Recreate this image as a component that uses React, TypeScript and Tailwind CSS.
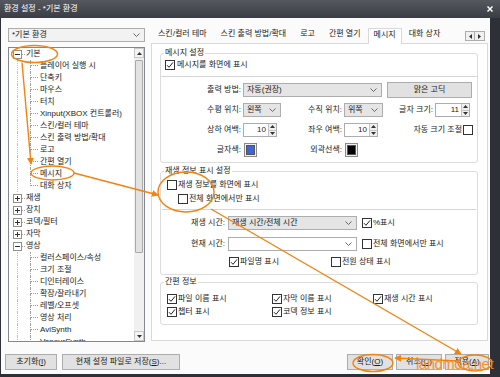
import React from "react";

const ORANGE = "#f5820d";

type TreeNode = { label: string; top?: boolean; exp?: "+" | "-"; last?: boolean };

const TREE: TreeNode[] = [
  { label: "기본", top: true, exp: "-" },
  { label: "플레이어 실행 시" },
  { label: "단축키" },
  { label: "마우스" },
  { label: "터치" },
  { label: "Xinput(XBOX 컨트롤러)" },
  { label: "스킨/컬러 테마" },
  { label: "스킨 출력 방법/확대" },
  { label: "로고" },
  { label: "간편 열기" },
  { label: "메시지" },
  { label: "대화 상자", last: true },
  { label: "재생", top: true, exp: "+" },
  { label: "장치", top: true, exp: "+" },
  { label: "코덱/필터", top: true, exp: "+" },
  { label: "자막", top: true, exp: "+" },
  { label: "영상", top: true, exp: "-" },
  { label: "컬러스페이스/속성" },
  { label: "크기 조절" },
  { label: "디인터레이스" },
  { label: "확장/잘라내기" },
  { label: "레벨/오프셋" },
  { label: "영상 처리" },
  { label: "AviSynth" },
  { label: "VapourSynth" },
];

const TABS = ["스킨/컬러 테마", "스킨 출력 방법/확대", "로고", "간편 열기", "메시지", "대화 상자"];

function Chevron() {
  return (
    <svg width="7" height="4" viewBox="0 0 7 4" className="shrink-0">
      <path d="M0.5 0.5 L3.5 3.5 L6.5 0.5" fill="none" stroke="#5a5a5a" strokeWidth="0.9" />
    </svg>
  );
}

function Tri({ dir }: { dir: "up" | "down" | "left" | "right" }) {
  const d = {
    up: "M0 3 L2.5 0 L5 3 Z",
    down: "M0 0 L5 0 L2.5 3 Z",
    left: "M3 0 L3 5 L0 2.5 Z",
    right: "M0 0 L3 2.5 L0 5 Z",
  }[dir];
  const horiz = dir === "left" || dir === "right";
  return (
    <svg width={horiz ? 3 : 5} height={horiz ? 5 : 3} viewBox={horiz ? "0 0 3 5" : "0 0 5 3"}>
      <path d={d} fill="#333" />
    </svg>
  );
}

function Combo({ value, className, white }: { value: string; className: string; white?: boolean }) {
  return (
    <div
      className={`flex h-[14px] shrink-0 items-center justify-between border border-[#adadad] pl-[3px] pr-[4px] ${
        white ? "bg-white" : "bg-[#e5e5e5]"
      } ${className}`}
    >
      <span className="truncate">{value}</span>
      <Chevron />
    </div>
  );
}

function Check({ checked }: { checked?: boolean }) {
  return (
    <span className="flex h-[10px] w-[10px] shrink-0 items-center justify-center border border-[#333] bg-white">
      {checked && (
        <svg width="8" height="8" viewBox="0 0 8 8">
          <path d="M1 4.2 L3 6.3 L7 1.4" fill="none" stroke="#222" strokeWidth="1" />
        </svg>
      )}
    </span>
  );
}

function CheckLabel({ checked, label, className }: { checked?: boolean; label: string; className?: string }) {
  return (
    <div className={`flex h-[12px] shrink-0 items-center gap-[1px] whitespace-nowrap ${className ?? ""}`}>
      <Check checked={checked} />
      <span>{label}</span>
    </div>
  );
}

function Spin({ value, className }: { value: string; className: string }) {
  return (
    <div className={`flex h-[14px] shrink-0 border border-[#abadb3] bg-white ${className}`}>
      <span className="flex-1 pr-[2px] text-right leading-[12px]">{value}</span>
      <span className="flex w-[8px] flex-col border-l border-[#c3c3c3] bg-[#f0f0f0]">
        <span className="flex flex-1 items-center justify-center border-b border-[#c3c3c3]">
          <Tri dir="up" />
        </span>
        <span className="flex flex-1 items-center justify-center">
          <Tri dir="down" />
        </span>
      </span>
    </div>
  );
}

function Swatch({ color, className }: { color: string; className: string }) {
  return (
    <span className={`flex h-[14px] w-[13px] shrink-0 border border-[#8a8a8a] bg-[#f0f0f0] p-[1px] ${className}`}>
      <span className={`flex-1 border border-[#555] ${color}`} />
    </span>
  );
}

function Label({ children, className }: { children: React.ReactNode; className: string }) {
  return <span className={`shrink-0 whitespace-nowrap text-right ${className}`}>{children}</span>;
}

function Btn({ children, className }: { children: React.ReactNode; className: string }) {
  return (
    <div
      className={`flex h-[16px] shrink-0 items-center justify-center whitespace-nowrap border border-[#adadad] bg-[#e1e1e1] ${className}`}
    >
      {children}
    </div>
  );
}

function GroupTitle({ children }: { children: React.ReactNode }) {
  return <div className="-mt-[7px] ml-[3px] w-fit bg-white px-[1px] leading-[12px]">{children}</div>;
}

function TreeRow({ node }: { node: TreeNode }) {
  if (node.top) {
    return (
      <div className="flex h-[12px] items-center pl-[4px] whitespace-nowrap">
        <span className="relative flex h-[9px] w-[9px] items-center justify-center border border-[#919191] bg-white">
          <span className="h-px w-[5px] bg-[#333]" />
          {node.exp === "+" && <span className="absolute h-[5px] w-px bg-[#333]" />}
        </span>
        <span className="w-[3px] border-t border-dotted border-[#a0a0a0]" />
        <span className="ml-[1px]">{node.label}</span>
      </div>
    );
  }
  return (
    <div className="flex h-[12px] items-stretch whitespace-nowrap">
      <span className="w-[21px] shrink-0">
        <span className="ml-[8px] block h-full border-l border-dotted border-[#c0c0c0]" />
      </span>
      <span className="flex w-[8px] shrink-0 flex-col">
        <span className="h-[6px] border-b border-l border-dotted border-[#a0a0a0]" />
        {!node.last && <span className="h-[6px] border-l border-dotted border-[#a0a0a0]" />}
      </span>
      <span className="ml-[2px] self-center">{node.label}</span>
    </div>
  );
}

export default function App() {
  return (
    <div className="relative h-[377px] w-[500px] overflow-hidden bg-[#2d3037] font-['Liberation_Sans','Noto_Sans_CJK_KR',sans-serif] text-[8px] leading-[12px] text-[#1b1b1b]">
      {/* title bar */}
      <div className="flex h-[18px] items-center justify-between bg-linear-to-b from-[#55585f] to-[#3a3d44] pl-[4px] pr-[7px] text-white">
        <span>환경 설정 - *기본 환경</span>
        <svg width="6" height="6" viewBox="0 0 6 6">
          <path d="M0.5 0.5 L5.5 5.5 M5.5 0.5 L0.5 5.5" stroke="#fff" strokeWidth="1.5" />
        </svg>
      </div>

      <div className="ml-[1px] flex h-[356px] w-[489px] flex-col bg-[#fbfbfb]">
        <div className="flex pl-[7px] pt-[10px]">
          {/* left: profile + tree */}
          <div className="flex w-[137px] flex-col gap-[5px]">
            <div className="flex h-[14px] items-center justify-between border border-[#acacac] bg-[#f2f2f2] pl-[3px] pr-[4px]">
              <span>*기본 환경</span>
              <Chevron />
            </div>
            <div className="flex h-[295px] border border-[#828790] bg-white">
              <div className="flex-1 overflow-hidden">
                {TREE.map((n, i) => (
                  <TreeRow key={i} node={n} />
                ))}
              </div>
              <div className="flex w-[10px] flex-col bg-[#f0f0f0]">
                <div className="flex h-[10px] items-center justify-center border border-[#c8c8c8] bg-[#f4f4f4]">
                  <Tri dir="up" />
                </div>
                <div className="flex-1 px-[1px] pt-[2px]">
                  <div className="h-[193px] rounded-[1px] border border-[#a9a9a9] bg-[#e2e2e2]" />
                </div>
                <div className="flex h-[10px] items-center justify-center border border-[#c8c8c8] bg-[#f4f4f4]">
                  <Tri dir="down" />
                </div>
              </div>
            </div>
          </div>

          {/* right: tabs + page */}
          <div className="ml-[6px] w-[337px]">
            <div className="relative z-10 flex h-[15px]">
              <div className="flex h-[16px] flex-1 items-start overflow-hidden">
                {TABS.map((t) =>
                  t === "메시지" ? (
                    <div
                      key={t}
                      className="h-[16px] shrink-0 whitespace-nowrap border border-b-0 border-[#d9d9d9] bg-white px-[5px]"
                    >
                      {t}
                    </div>
                  ) : (
                    <div key={t} className="h-[15px] shrink-0 whitespace-nowrap px-[7px]">
                      {t}
                    </div>
                  )
                )}
              </div>
              <div className="mr-[3px] mt-[3px] flex h-[10px]">
                <span className="flex w-[10px] items-center justify-center border border-[#adadad] bg-[#f0f0f0]">
                  <Tri dir="left" />
                </span>
                <span className="flex w-[10px] items-center justify-center border border-l-0 border-[#adadad] bg-[#f0f0f0]">
                  <Tri dir="right" />
                </span>
              </div>
            </div>

            <div className="h-[298px] border border-[#d9d9d9] bg-white pl-[8px]">
              {/* 메시지 설정 */}
              <div className="mt-[9px] w-[318px] rounded-[3px] border border-[#dcdcdc] pb-[5px]">
                <GroupTitle>메시지 설정</GroupTitle>
                <CheckLabel className="ml-[4px] gap-[2px]" checked label="메시지를 화면에 표시" />
                <div className="mt-[5px] border-t border-[#d5d5d5]" />
                <div className="mt-[6px] flex h-[14px] items-center">
                  <Label className="w-[80px]">출력 방법:</Label>
                  <Combo className="ml-[2px] w-[139px]" value="자동(권장)" />
                  <Btn className="ml-[5px] h-[14px] w-[85px]">맑은 고딕</Btn>
                </div>
                <div className="mt-[6px] flex h-[14px] items-center">
                  <Label className="w-[80px]">수평 위치:</Label>
                  <Combo className="ml-[2px] w-[38px]" value="왼쪽" />
                  <Label className="w-[61px]">수직 위치:</Label>
                  <Combo className="ml-[2px] w-[39px]" value="위쪽" />
                  <Label className="w-[50px]">글자 크기:</Label>
                  <Spin className="ml-[2px] w-[35px]" value="11" />
                </div>
                <div className="mt-[6px] flex h-[14px] items-center">
                  <Label className="w-[80px]">상하 여백:</Label>
                  <Spin className="ml-[2px] w-[34px]" value="10" />
                  <Label className="w-[65px]">좌우 여백:</Label>
                  <Spin className="ml-[2px] w-[34px]" value="10" />
                  <Label className="w-[84px]">자동 크기 조절</Label>
                  <span className="ml-[1px]">
                    <Check />
                  </span>
                </div>
                <div className="mt-[6px] flex h-[14px] items-center">
                  <Label className="w-[80px]">글자색:</Label>
                  <Swatch className="ml-[3px]" color="bg-[#3f63dd]" />
                  <Label className="w-[85px]">외곽선색:</Label>
                  <Swatch className="ml-[3px]" color="bg-black" />
                </div>
              </div>

              {/* 재생 정보 표시 설정 */}
              <div className="mt-[8px] w-[318px] rounded-[3px] border border-[#dcdcdc] pb-[6px]">
                <GroupTitle>재생 정보 표시 설정</GroupTitle>
                <CheckLabel className="ml-[6px] mt-[2px]" label="재생 정보를 화면에 표시" />
                <CheckLabel className="ml-[17px] mt-[2px]" label="전체 화면에서만 표시" />
                <div className="mx-[1px] mt-[4px] border-t border-[#d5d5d5]" />
                <div className="mt-[6px] flex h-[14px] items-center">
                  <Label className="w-[64px]">재생 시간:</Label>
                  <Combo className="ml-[3px] w-[129px]" value="재생 시간/전체 시간" />
                  <CheckLabel className="ml-[5px]" checked label="%표시" />
                </div>
                <div className="mt-[7px] flex h-[14px] items-center">
                  <Label className="w-[64px]">현재 시간:</Label>
                  <Combo className="ml-[3px] w-[129px]" value="" white />
                  <CheckLabel className="ml-[5px]" label="전체 화면에서만 표시" />
                </div>
                <div className="mt-[5px] flex h-[12px] items-center pl-[68px]">
                  <CheckLabel className="w-[102px]" checked label="파일명 표시" />
                  <CheckLabel label="전원 상태 표시" />
                </div>
              </div>

              {/* 간편 정보 */}
              <div className="mt-[7px] w-[318px] rounded-[3px] border border-[#dcdcdc] pb-[6px]">
                <GroupTitle>간편 정보</GroupTitle>
                <div className="mt-[5px] flex pl-[6px]">
                  <CheckLabel className="w-[105px]" checked label="파일 이름 표시" />
                  <CheckLabel className="w-[101px]" checked label="자막 이름 표시" />
                  <CheckLabel checked label="재생 시간 표시" />
                </div>
                <div className="mt-[1px] flex pl-[6px]">
                  <CheckLabel className="w-[105px]" checked label="챕터 표시" />
                  <CheckLabel checked label="코덱 정보 표시" />
                </div>
              </div>
            </div>
          </div>
        </div>

        {/* bottom buttons */}
        <div className="mt-[12px] flex pl-[4px] pr-[1px]">
          <Btn className="w-[52px]">
            <span>
              초기화(<u>I</u>)
            </span>
          </Btn>
          <Btn className="ml-[5px] w-[118px]">
            <span>
              현재 설정 파일로 저장(<u>S</u>)...
            </span>
          </Btn>
          <div className="ml-auto flex gap-[3px]">
            <Btn className="w-[46px]">
              <span>
                확인(<u>O</u>)
              </span>
            </Btn>
            <Btn className="w-[46px]">
              <span>
                취소(<u>C</u>)
              </span>
            </Btn>
            <Btn className="w-[44px]">
              <span>
                적용(<u>A</u>)
              </span>
            </Btn>
          </div>
        </div>
      </div>

      {/* orange annotations */}
      <svg className="pointer-events-none absolute left-0 top-0" width="500" height="377" viewBox="0 0 500 377">
        <defs>
          <marker
            id="ah"
            viewBox="0 0 8 8"
            refX="7"
            refY="4"
            markerWidth="7"
            markerHeight="7"
            markerUnits="userSpaceOnUse"
            orient="auto"
          >
            <path d="M0,0 L8,4 L0,8 z" fill={ORANGE} />
          </marker>
        </defs>
        <g fill="none" stroke={ORANGE} strokeWidth="1.4">
          <ellipse cx="34.5" cy="54" rx="23" ry="8.5" />
          <line x1="22" y1="62.5" x2="31" y2="164" markerEnd="url(#ah)" />
          <ellipse cx="52.5" cy="173" rx="21.5" ry="7" />
          <line x1="74" y1="173" x2="158" y2="195" markerEnd="url(#ah)" />
          <ellipse cx="186" cy="192" rx="28" ry="20" />
          <line x1="211" y1="209" x2="461" y2="354" markerEnd="url(#ah)" />
          <ellipse cx="475" cy="363" rx="17" ry="8" />
          <line x1="458" y1="361" x2="395" y2="358" markerEnd="url(#ah)" />
          <ellipse cx="373" cy="363" rx="20" ry="8.5" />
        </g>
      </svg>

      <div className="pointer-events-none absolute left-[416px] top-[355px] font-['Liberation_Sans',sans-serif] text-[15px] leading-[18px] tracking-[-0.5px] text-[#f08a28]/90">
        landmoa.net
      </div>
    </div>
  );
}
